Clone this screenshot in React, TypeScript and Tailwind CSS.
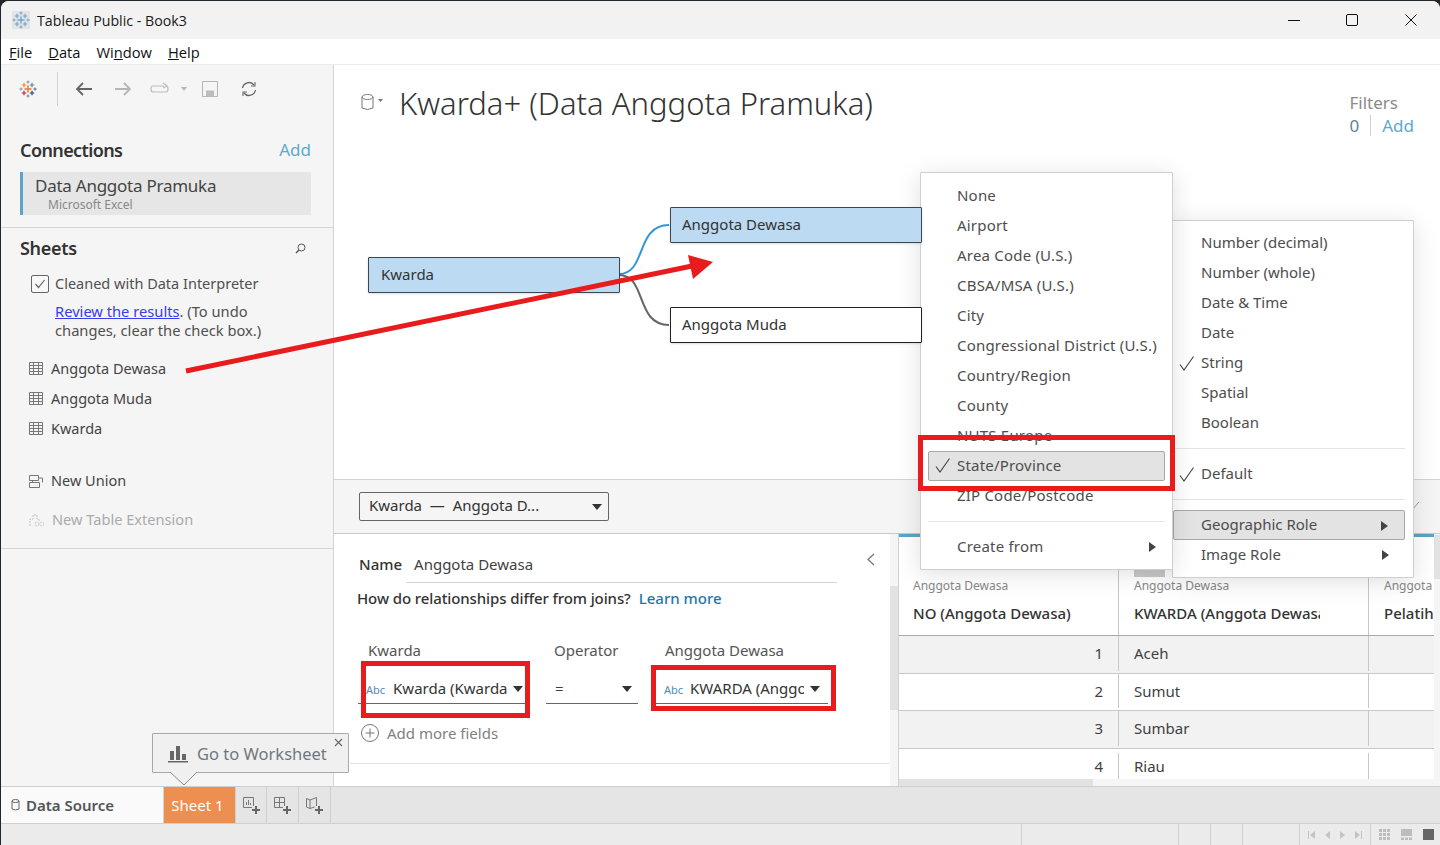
import React from "react";

const geoItems = ["None", "Airport", "Area Code (U.S.)", "CBSA/MSA (U.S.)", "City", "Congressional District (U.S.)", "Country/Region", "County", "NUTS Europe"];
const typeItems = ["Number (decimal)", "Number (whole)", "Date & Time", "Date", "String", "Spatial", "Boolean"];
const rows = [
  { no: "1", name: "Aceh", shade: true, h: "h-[38px] pb-[2px]" },
  { no: "2", name: "Sumut", shade: false, h: "h-[37px] pb-[2px]" },
  { no: "3", name: "Sumbar", shade: true, h: "h-[38px] pb-[2px]" },
  { no: "4", name: "Riau", shade: false, h: "h-[30px] pt-[4px]" },
];
const sheets = ["Anggota Dewasa", "Anggota Muda", "Kwarda"];

const Check = ({ className = "top-[7px]" }: { className?: string }) => (
  <svg width="16" height="16" viewBox="0 0 16 16" className={`absolute left-[-22px] ${className}`}>
    <path d="M1 9.5 L5 15 L14.5 1.5" fill="none" stroke="#444" strokeWidth="1.1" />
  </svg>
);

const Caret = ({ className }: { className?: string }) => (
  <svg width="10" height="6" viewBox="0 0 10 6" className={className}>
    <path d="M0 0 H10 L5 6 Z" fill="#333" />
  </svg>
);

const RightCaret = () => (
  <svg width="7" height="10" viewBox="0 0 7 10" className="absolute right-[16px] top-[10px]">
    <path d="M0 0 L7 5 L0 10 Z" fill="#444" />
  </svg>
);

const TableIcon = () => (
  <svg width="14" height="13" viewBox="0 0 14 13" className="shrink-0">
    <path d="M.5 .5 H13.5 V12.5 H.5 Z M.5 3.5 H13.5 M.5 6.5 H13.5 M.5 9.5 H13.5 M4.5 .5 V12.5 M9.5 .5 V12.5" fill="none" stroke="#777" />
  </svg>
);

const Crosses = ({ mono }: { mono?: boolean }) => {
  const c = (col: string) => (mono ? "#6fa6cf" : col);
  const cross = (x: number, y: number, s: number, col: string, w: number) => (
    <path d={`M${x - s} ${y} H${x + s} M${x} ${y - s} V${y + s}`} stroke={c(col)} strokeWidth={w} />
  );
  return (
    <svg width="18" height="18" viewBox="0 0 18 18" fill="none">
      {cross(9, 9, 3.5, "#e8762d", 1.4)}
      {cross(5, 5, 2.3, "#f28e2b", 1.2)}
      {cross(13, 5, 2.3, "#59879b", 1.2)}
      {cross(5, 13, 2.3, "#c72037", 1.2)}
      {cross(13, 13, 2.3, "#1f447a", 1.2)}
      {cross(9, 2, 1.5, "#7099a6", 1)}
      {cross(9, 16, 1.5, "#5b879b", 1)}
      {cross(2, 9, 1.5, "#7099a6", 1)}
      {cross(16, 9, 1.5, "#5b6591", 1)}
    </svg>
  );
};

const PlusBadge = () => (
  <path d="M9 13 H17 M13 9 V17" stroke="#666" strokeWidth="2" />
);

export default function App() {
  return (
    <div className="relative w-[1440px] h-[845px] overflow-hidden bg-[#20262b] pt-px pl-px text-[15px] text-[#3f3f3f] [font-family:'Noto_Sans',sans-serif]">
      <div className="flex flex-col h-[844px] bg-white rounded-t-[8px] overflow-hidden">
        {/* title bar */}
        <div className="flex items-center h-[38px] shrink-0 bg-[#f2f2f2] [font-family:'Open_Sans',sans-serif] text-[14.2px] text-[#1a1a1a]">
          <div className="ml-[11px] w-[18px] h-[18px] bg-[#e4e4e4] flex items-center justify-center">
            <Crosses mono />
          </div>
          <span className="ml-[7px] mt-[2px]">Tableau Public - Book3</span>
          <div className="ml-auto flex items-center">
            <svg width="14" height="14" viewBox="0 0 14 14" className="mr-[44px]"><path d="M1 7.5 H13" stroke="#111" /></svg>
            <svg width="14" height="14" viewBox="0 0 14 14" className="mr-[45px]"><rect x="1.5" y="1.5" width="11" height="11" rx="1.5" fill="none" stroke="#111" /></svg>
            <svg width="14" height="14" viewBox="0 0 14 14" className="mr-[22px]"><path d="M1.5 1.5 L12.5 12.5 M12.5 1.5 L1.5 12.5" stroke="#111" /></svg>
          </div>
        </div>
        {/* menu bar */}
        <div className="flex items-center gap-[16px] h-[26px] shrink-0 pl-[8px] pt-px bg-white border-b border-[#ececec] [font-family:'Open_Sans',sans-serif] text-[14.7px] text-[#111]">
          <span><u>F</u>ile</span>
          <span><u>D</u>ata</span>
          <span>Wi<u>n</u>dow</span>
          <span><u>H</u>elp</span>
        </div>

        <div className="flex flex-1 min-h-0">
          {/* left panel */}
          <div className="w-[333px] shrink-0 flex flex-col bg-[#f5f5f5] border-r border-[#d4d4d4]">
            <div className="flex items-center h-[48px] mt-[0px] pl-[18px] shrink-0">
              <Crosses />
              <div className="ml-[20px] h-[34px] w-px bg-[#cfcfcf]" />
              <svg width="18" height="14" viewBox="0 0 18 14" className="ml-[17px]" fill="none" stroke="#666" strokeWidth="1.8"><path d="M17 7 H2 M8 1 L2 7 L8 13" /></svg>
              <svg width="18" height="14" viewBox="0 0 18 14" className="ml-[21px]" fill="none" stroke="#b5b5b5" strokeWidth="1.8"><path d="M1 7 H16 M10 1 L16 7 L10 13" /></svg>
              <svg width="20" height="14" viewBox="0 0 20 14" className="ml-[18px]" fill="none" stroke="#bdbdbd" strokeWidth="1.2"><path d="M14 4 H3 Q1 4 1 7 Q1 10 3 10 H16 Q18 10 18 7 Q18 5 17 4.5 M13 1 L17 4 L13 6" /></svg>
              <svg width="6" height="4" viewBox="0 0 6 4" className="ml-[11px]"><path d="M0 0 H6 L3 4 Z" fill="#b5b5b5" /></svg>
              <svg width="16" height="16" viewBox="0 0 16 16" className="ml-[15px]" fill="none" stroke="#b5b5b5"><path d="M.5 .5 H15.5 V15.5 H.5 Z" /><rect x="4.5" y="10" width="7" height="5" fill="#bdbdbd" stroke="#bdbdbd" /></svg>
              <svg width="18" height="16" viewBox="0 0 18 16" className="ml-[22px]" fill="none" stroke="#666" strokeWidth="1.3"><path d="M2.5 7 A6.5 6.5 0 0 1 14 4 M15.5 9 A6.5 6.5 0 0 1 4 12" /><path d="M15 1 V5 H11 M3 15 V11 H7" strokeWidth="1.1" /></svg>
            </div>

            <div className="flex items-center justify-between h-[30px] mt-[22px] pl-[19px] pr-[22px] shrink-0">
              <span className="text-[18px] font-semibold text-[#333] tracking-[-0.6px]">Connections</span>
              <span className="text-[17px] text-[#5ca9d0]">Add</span>
            </div>
            <div className="ml-[19px] mr-[22px] mt-[7px] h-[43px] shrink-0 bg-[#e6e6e6] border-l-[3px] border-[#5ba3c9] pl-[12px] flex flex-col">
              <span className="text-[17px] leading-[20px] mt-[4px] text-[#444] tracking-[-0.25px]">Data Anggota Pramuka</span>
              <span className="text-[12px] leading-[14px] mt-[2px] ml-[13px] text-[#888]">Microsoft Excel</span>
            </div>
            <div className="h-px mt-[12px] bg-[#d4d4d4] shrink-0" />

            <div className="flex items-center justify-between h-[26px] mt-[7px] pl-[19px] pr-[27px] shrink-0">
              <span className="text-[18px] font-semibold text-[#333] tracking-[-0.3px]">Sheets</span>
              <svg width="11" height="11" viewBox="0 0 11 11" fill="none" stroke="#555"><circle cx="6.5" cy="4.5" r="3.5" /><path d="M4 7 L1 10" strokeWidth="1.4" /></svg>
            </div>
            <div className="flex items-center ml-[30px] mt-[12px] shrink-0">
              <div className="w-[18px] h-[18px] border border-[#666] rounded-[2px] bg-[#f8f8f8] flex items-center justify-center">
                <svg width="12" height="10" viewBox="0 0 12 10" fill="none" stroke="#666" strokeWidth="1.2"><path d="M1.5 5 L4.5 8.5 L10.5 1" /></svg>
              </div>
              <span className="ml-[6px] text-[14.5px] text-[#505050]">Cleaned with Data Interpreter</span>
            </div>
            <p className="ml-[54px] mt-[7px] text-[14.7px] leading-[19px] text-[#505050] shrink-0">
              <span className="text-[#3a3aee] underline">Review the results</span>. (To undo
              <br />
              changes, clear the check box.)
            </p>
            <div className="flex flex-col mt-[14px] shrink-0 text-[14.5px]">
              {sheets.map((s) => (
                <div key={s} className="flex items-center h-[30px] pl-[28px] gap-[8px] text-[#444]">
                  <TableIcon />
                  <span>{s}</span>
                </div>
              ))}
            </div>
            <div className="flex items-center h-[30px] mt-[22px] pl-[28px] gap-[8px] text-[14.5px] text-[#444] shrink-0">
              <svg width="14" height="14" viewBox="0 0 14 14" fill="none" stroke="#777"><path d="M.5 1.5 H9.5 V6.5 H.5 Z M9.5 4 H13.5 V8.5 M3.5 6.5 V8.5 M.5 8.5 H10.5 V13.5 H.5 Z" /></svg>
              <span>New Union</span>
            </div>
            <div className="flex items-center h-[30px] mt-[9px] pl-[28px] gap-[8px] text-[14.6px] text-[#ababab] shrink-0">
              <svg width="15" height="14" viewBox="0 0 15 14" fill="none" stroke="#c4c4c4" strokeDasharray="2 1"><path d="M1 13 V6 H4 V2 H8 V6 H10 V9" /><circle cx="8" cy="11" r="2" /><circle cx="13" cy="11" r="2" /></svg>
              <span>New Table Extension</span>
            </div>
            <div className="h-px mt-[13px] bg-[#d4d4d4] shrink-0" />
          </div>

          {/* right side */}
          <div className="flex-1 min-w-0 flex flex-col bg-white">
            <div className="relative h-[415px] shrink-0 border-b border-[#d4d4d4]">
              <div className="flex items-start pt-[19px] pl-[27px]">
                <svg width="14" height="17" viewBox="0 0 14 17" fill="none" stroke="#777" className="mt-[10px]"><ellipse cx="6.5" cy="3" rx="5.5" ry="2.5" /><path d="M1 3 V14 Q6.5 17 12 14 V3" /></svg>
                <svg width="5" height="3" viewBox="0 0 5 3" className="mt-[15px] ml-[3px]"><path d="M0 0 H5 L2.5 3 Z" fill="#777" /></svg>
                <h1 className="ml-[16px] text-[31px] leading-[38px] font-light text-[#333]">Kwarda+ (Data Anggota Pramuka)</h1>
                <div className="ml-auto mr-[26px] mt-[7px] flex flex-col text-[17px] leading-[23px] text-[#8a8a8a]">
                  <span>Filters</span>
                  <div className="flex items-center">
                    <span className="text-[#5f7f98]">0</span>
                    <div className="w-px h-[21px] bg-[#cfcfcf] mx-[11px]" />
                    <span className="text-[#5ca9d0]">Add</span>
                  </div>
                </div>
              </div>
              {/* diagram nodes */}
              <svg width="60" height="120" viewBox="0 0 60 120" fill="none" className="absolute left-[285px] top-[150px]">
                <path d="M0 59 C 28 59 16 10 50 10" stroke="#2f97d6" strokeWidth="2" />
                <path d="M0 60 C 28 60 16 110 50 110" stroke="#666" strokeWidth="2" />
              </svg>
              <div className="absolute z-10 left-[34px] top-[192px] w-[252px] h-[36px] flex items-center pl-[12px] pb-[2px] bg-[#bcdaf2] border border-[#3c4650] rounded-[1px] text-[#333] shadow-sm">Kwarda</div>
              <div className="absolute z-10 left-[336px] top-[142px] w-[252px] h-[36px] flex items-center pl-[11px] pb-[2px] bg-[#bcdaf2] border border-[#3c4650] rounded-[1px] text-[#333] shadow-sm">Anggota Dewasa</div>
              <div className="absolute z-10 left-[336px] top-[242px] w-[252px] h-[36px] flex items-center pl-[11px] pb-[2px] bg-white border border-[#222] rounded-[1px] text-[#333] shadow-sm">Anggota Muda</div>
            </div>

            <div className="relative h-[54px] shrink-0 bg-[#f5f5f5] border-b border-[#c8c8c8] flex items-center pl-[25px]">
              <div className="w-[250px] h-[29px] flex items-center justify-between pl-[9px] pr-[6px] pb-[2px] border border-[#666] rounded-[2px] text-[#333]">
                <span>Kwarda &nbsp;— &nbsp;Anggota D...</span>
                <Caret className="mt-[2px]" />
              </div>
              <svg width="8" height="8" viewBox="0 0 8 8" className="absolute left-[1078px] top-[22px]"><path d="M0 8 L7 0" stroke="#999" /></svg>
            </div>

            <div className="flex flex-1 min-h-0">
              {/* relationship editor */}
              <div className="w-[556px] shrink-0 relative">
                <div className="flex items-center mt-[14px] ml-[25px] mr-[53px] h-[35px]">
                  <span className="font-medium text-[#333] mb-[2px]">Name</span>
                  <div className="ml-[4px] flex-1 h-full flex items-center pl-[8px] pb-[2px] border-b border-[#d4d4d4]">Anggota Dewasa</div>
                </div>
                <svg width="8" height="13" viewBox="0 0 8 13" fill="none" stroke="#777" strokeWidth="1.3" className="absolute left-[533px] top-[19px]"><path d="M7 1 L1 6.5 L7 12" /></svg>
                <div className="flex items-baseline ml-[23px] mt-[4px] h-[22px]">
                  <span className="font-medium text-[#333] tracking-[-0.1px]">How do relationships differ from joins?</span>
                  <span className="ml-[8px] font-medium text-[#1f77a8]">Learn more</span>
                </div>
                <div className="flex mt-[30px] ml-[24px]">
                  <div className="flex flex-col w-[167px]">
                    <span className="ml-[10px] h-[21px] text-[#555]">Kwarda</span>
                    <div className="flex items-center h-[43px] border-b border-[#666] pl-[8px] pr-[2px] pt-[13px] mt-[1px]">
                      <span className="text-[11px] text-[#4f8db3] mt-[3px]">Abc</span>
                      <span className="ml-[8px] flex-1 overflow-hidden whitespace-nowrap text-[#333]">Kwarda (Kwarda</span>
                      <Caret className="ml-[3px]" />
                    </div>
                  </div>
                  <div className="flex flex-col w-[92px] ml-[21px]">
                    <span className="ml-[8px] h-[21px] text-[#555]">Operator</span>
                    <div className="flex items-center justify-between h-[43px] border-b border-[#666] pl-[9px] pr-[6px] pt-[13px] mt-[1px]">
                      <span>=</span>
                      <Caret />
                    </div>
                  </div>
                  <div className="flex flex-col w-[172px] ml-[18px]">
                    <span className="ml-[9px] h-[21px] text-[#555]">Anggota Dewasa</span>
                    <div className="flex items-center h-[43px] border-b border-[#666] pl-[8px] pr-[8px] pt-[13px] mt-[1px]">
                      <span className="text-[11px] text-[#4f8db3] mt-[3px]">Abc</span>
                      <span className="ml-[7px] flex-1 overflow-hidden whitespace-nowrap text-[#333]">KWARDA (Anggota</span>
                      <Caret className="ml-[6px]" />
                    </div>
                  </div>
                </div>
                <div className="flex items-center ml-[27px] mt-[18px] text-[#7f7f7f]">
                  <svg width="18" height="18" viewBox="0 0 18 18" fill="none" stroke="#777"><circle cx="9" cy="9" r="8.5" /><path d="M4.5 9 H13.5 M9 4.5 V13.5" /></svg>
                  <span className="ml-[8px]">Add more fields</span>
                </div>
                <div className="ml-[16px] mt-[18px] h-px bg-[#e4e4e4]" />
              </div>

              {/* scrollbar */}
              <div className="w-[8px] shrink-0 bg-[#f5f5f5] pt-[52px]">
                <div className="h-[124px] bg-[#e2e2e2]" />
              </div>

              {/* data grid */}
              <div className="relative flex-1 min-w-0 flex flex-col border-l border-[#d0d0d0] overflow-hidden">
                <div className="h-[3px] shrink-0 bg-[#5ba3c9]" />
                <div className="flex h-[99px] shrink-0 border-b border-[#a8a8a8]">
                  <div className="w-[220px] shrink-0 border-r border-[#c8c8c8] pl-[14px] pt-[41px] overflow-hidden">
                    <div className="text-[12px] leading-[16px] text-[#888]">Anggota Dewasa</div>
                    <div className="mt-[9px] leading-[20px] font-medium text-[#333]">NO (Anggota Dewasa)</div>
                  </div>
                  <div className="w-[250px] shrink-0 border-r border-[#c8c8c8] pl-[15px] pr-[48px] pt-[41px] overflow-hidden whitespace-nowrap">
                    <div className="text-[12px] leading-[16px] text-[#888]">Anggota Dewasa</div>
                    <div className="mt-[9px] leading-[20px] font-medium text-[#333] overflow-hidden">KWARDA (Anggota Dewasa)</div>
                  </div>
                  <div className="flex-1 pl-[15px] pt-[41px] overflow-hidden whitespace-nowrap">
                    <div className="text-[12px] leading-[16px] text-[#888]">Anggota Dewasa</div>
                    <div className="mt-[9px] leading-[20px] font-medium text-[#333]">Pelatih</div>
                  </div>
                </div>
                {rows.map((r) => (
                  <div key={r.no} className={`flex shrink-0 ${r.h} ${r.shade ? "bg-[#f2f2f2]" : "bg-white"} ${r.no === "4" ? "" : "border-b border-[#c8c8c8]"}`}>
                    <div className="w-[220px] shrink-0 border-r border-[#c8c8c8] pr-[15px] flex items-center justify-end">{r.no}</div>
                    <div className="w-[250px] shrink-0 border-r border-[#c8c8c8] pl-[15px] flex items-center">{r.name}</div>
                  </div>
                ))}
                <div className="h-[7px] shrink-0 bg-[#f5f5f5] mt-auto">
                  <div className="w-[194px] h-full bg-[#e2e2e2]" />
                </div>
                <div className="absolute right-0 top-0 bottom-0 w-[6px] bg-[#f5f5f5]">
                  <div className="h-[44px] mt-[1px] bg-[#e2e2e2]" />
                </div>
                <div className="absolute left-[235px] top-[35px] w-[31px] h-[8px] bg-[#c8c8c8]" />
              </div>
            </div>
          </div>
        </div>

        {/* tabs */}
        <div className="flex h-[38px] shrink-0 border-y border-[#cfcfcf] bg-[#e5e5e5]">
          <div className="flex items-center w-[163px] pl-[10px] bg-[#fafafa] border-r border-[#d4d4d4]">
            <svg width="9" height="12" viewBox="0 0 9 12" fill="none" stroke="#666"><ellipse cx="4.5" cy="2" rx="3.5" ry="1.5" /><path d="M1 2 V10 Q4.5 12 8 10 V2" /></svg>
            <span className="ml-[6px] text-[15px] font-semibold text-[#555]">Data Source</span>
          </div>
          <div className="flex items-center justify-center w-[71px] pr-[4px] bg-[#ed8f50] text-white text-[15px]">Sheet 1</div>
          <div className="flex items-center justify-center w-[32px] border-l border-r border-[#cfcfcf]">
            <svg width="17" height="17" viewBox="0 0 17 17" fill="none" stroke="#777"><path d="M.5 .5 H10.5 V9 M9 10.5 H.5 V.5 M3.5 8 V5 M5.5 8 V3 M7.5 8 V6" /><PlusBadge /></svg>
          </div>
          <div className="flex items-center justify-center w-[32px] border-r border-[#cfcfcf]">
            <svg width="17" height="17" viewBox="0 0 17 17" fill="none" stroke="#777"><path d="M.5 .5 H10.5 V9 M9 10.5 H.5 V.5 M5.5 .5 V10.5 M.5 5.5 H10.5" /><PlusBadge /></svg>
          </div>
          <div className="flex items-center justify-center w-[32px] border-r border-[#cfcfcf]">
            <svg width="17" height="17" viewBox="0 0 17 17" fill="none" stroke="#777"><path d="M.5 1.5 L4 3 L10.5 .5 V9 M8.5 10 L4 11.5 L.5 10 V1.5 M4 3 V11.5" /><PlusBadge /></svg>
          </div>
        </div>

        {/* status bar */}
        <div className="flex items-stretch h-[21px] shrink-0 bg-[#ebebeb]">
          <div className="w-[1021px] border-r border-[#cfcfcf]" />
          <div className="w-[157px] border-r border-[#cfcfcf]" />
          <div className="w-[32px] border-r border-[#cfcfcf]" />
          <div className="w-[32px] border-r border-[#cfcfcf]" />
          <div className="w-[57px] border-r border-[#cfcfcf]" />
          <div className="w-[71px] border-r border-[#cfcfcf] flex items-center justify-between px-[8px]">
            <svg width="7" height="8" viewBox="0 0 7 8"><path d="M0 0 H1 V8 H0 Z M7 0 V8 L2 4 Z" fill="#c4c4c4" /></svg>
            <svg width="5" height="8" viewBox="0 0 5 8"><path d="M5 0 V8 L0 4 Z" fill="#c4c4c4" /></svg>
            <svg width="5" height="8" viewBox="0 0 5 8"><path d="M0 0 V8 L5 4 Z" fill="#c4c4c4" /></svg>
            <svg width="7" height="8" viewBox="0 0 7 8"><path d="M0 0 V8 L5 4 Z M6 0 H7 V8 H6 Z" fill="#c4c4c4" /></svg>
          </div>
          <div className="flex-1 flex items-center pl-[8px] gap-[11px]">
            <svg width="11" height="11" viewBox="0 0 11 11" fill="#bdbdbd"><path d="M0 0 H3 V3 H0 Z M4 0 H7 V3 H4 Z M8 0 H11 V3 H8 Z M0 4 H3 V7 H0 Z M4 4 H7 V7 H4 Z M8 4 H11 V7 H8 Z M0 8 H3 V11 H0 Z M4 8 H7 V11 H4 Z M8 8 H11 V11 H8 Z" /></svg>
            <svg width="11" height="11" viewBox="0 0 11 11" fill="#bdbdbd"><path d="M0 0 H11 V7 H0 Z M0 8.5 H3 V11 H0 Z M4 8.5 H7 V11 H4 Z M8 8.5 H11 V11 H8 Z" /></svg>
            <div className="w-[11px] h-[11px] bg-[#666]" />
          </div>
        </div>
      </div>

      {/* type menu */}
      <div className="absolute left-[1172px] top-[220px] w-[242px] h-[358px] bg-white border border-[#cfcfcf] rounded-[1px] shadow-[0_4px_24px_rgba(0,0,0,0.13)] text-[#4d4d4d]">
        <div className="flex flex-col pt-[7px]">
          {typeItems.map((t) => (
            <div key={t} className="relative h-[30px] leading-[28px] ml-[28px]">
              {t === "String" && <Check />}
              {t}
            </div>
          ))}
        </div>
        <div className="h-px bg-[#e4e4e4] ml-[0px] mr-[8px] mt-[10px]" />
        <div className="relative h-[30px] leading-[28px] ml-[28px] mt-[10px]"><Check />Default</div>
        <div className="h-px bg-[#e4e4e4] mr-[8px] mt-[10px]" />
        <div className="relative flex items-center h-[30px] mt-[10px] mr-[8px] pl-[27px] pb-[2px] bg-[#e3e3e3] border border-[#a8a8a8] rounded-[2px]">
          Geographic Role
          <RightCaret />
        </div>
        <div className="relative flex items-center h-[30px] mr-[8px] pl-[28px] pb-[2px]">
          Image Role
          <RightCaret />
        </div>
      </div>

      {/* geographic role menu */}
      <div className="absolute left-[920px] top-[172px] w-[253px] h-[398px] bg-white border border-[#cfcfcf] rounded-[1px] shadow-[0_4px_24px_rgba(0,0,0,0.13)] text-[#4d4d4d] tracking-[0.2px]">
        <div className="flex flex-col pt-[8px]">
          {geoItems.map((t) => (
            <div key={t} className="h-[30px] leading-[28px] pl-[36px]">{t}</div>
          ))}
        </div>
        <div className="relative flex items-center h-[30px] mx-[7px] pl-[28px] pb-[2px] bg-[#e3e3e3] border border-[#a8a8a8] rounded-[2px]">
          <span className="relative"><Check className="top-[3px]" />State/Province</span>
        </div>
        <div className="h-[30px] leading-[28px] pl-[36px]">ZIP Code/Postcode</div>
        <div className="h-px bg-[#e4e4e4] mx-[7px] mt-[10px]" />
        <div className="relative h-[30px] leading-[28px] pl-[36px] mt-[10px]">
          Create from
          <RightCaret />
        </div>
      </div>

      {/* annotation arrow */}
      <svg width="540" height="130" viewBox="0 0 540 130" className="absolute z-20 left-[180px] top-[250px] pointer-events-none">
        <path d="M6 121 L512 16" stroke="#e81c1c" strokeWidth="5" />
        <path d="M533 12 L508 5 L513 29 Z" fill="#e81c1c" />
      </svg>

      {/* annotation boxes */}
      <div className="absolute left-[918px] top-[435px] w-[257px] h-[56px] border-[5px] border-[#e81c1c] pointer-events-none" />
      <div className="absolute left-[361px] top-[661px] w-[169px] h-[57px] border-[5px] border-[#e81c1c] pointer-events-none" />
      <div className="absolute left-[651px] top-[665px] w-[185px] h-[46px] border-[5px] border-[#e81c1c] pointer-events-none" />

      {/* tooltip */}
      <div className="absolute left-[152px] top-[733px] w-[197px] h-[40px] flex items-center pl-[15px] pt-[2px] bg-[#f0f0f0] border border-[#a8a8a8] rounded-[1px] text-[#6f7880] text-[16.5px]">
        <svg width="20" height="19" viewBox="0 0 20 19" fill="#666" className="mb-[2px]"><path d="M2 7 H6 V16 H2 Z M8 2 H12 V16 H8 Z M14 10 H18 V16 H14 Z M0 17 H20 V18.5 H0 Z" /></svg>
        <span className="ml-[9px]">Go to Worksheet</span>
        <svg width="9" height="9" viewBox="0 0 9 9" className="absolute right-[5px] top-[4px]"><path d="M1 1 L8 8 M8 1 L1 8" stroke="#666" strokeWidth="1.1" /></svg>
        <svg width="28" height="15" viewBox="0 0 28 15" className="absolute left-[17px] top-[38px]"><path d="M0 0 L14 13 L27 0" fill="#f0f0f0" stroke="#8a8a8a" /></svg>
      </div>
    </div>
  );
}
